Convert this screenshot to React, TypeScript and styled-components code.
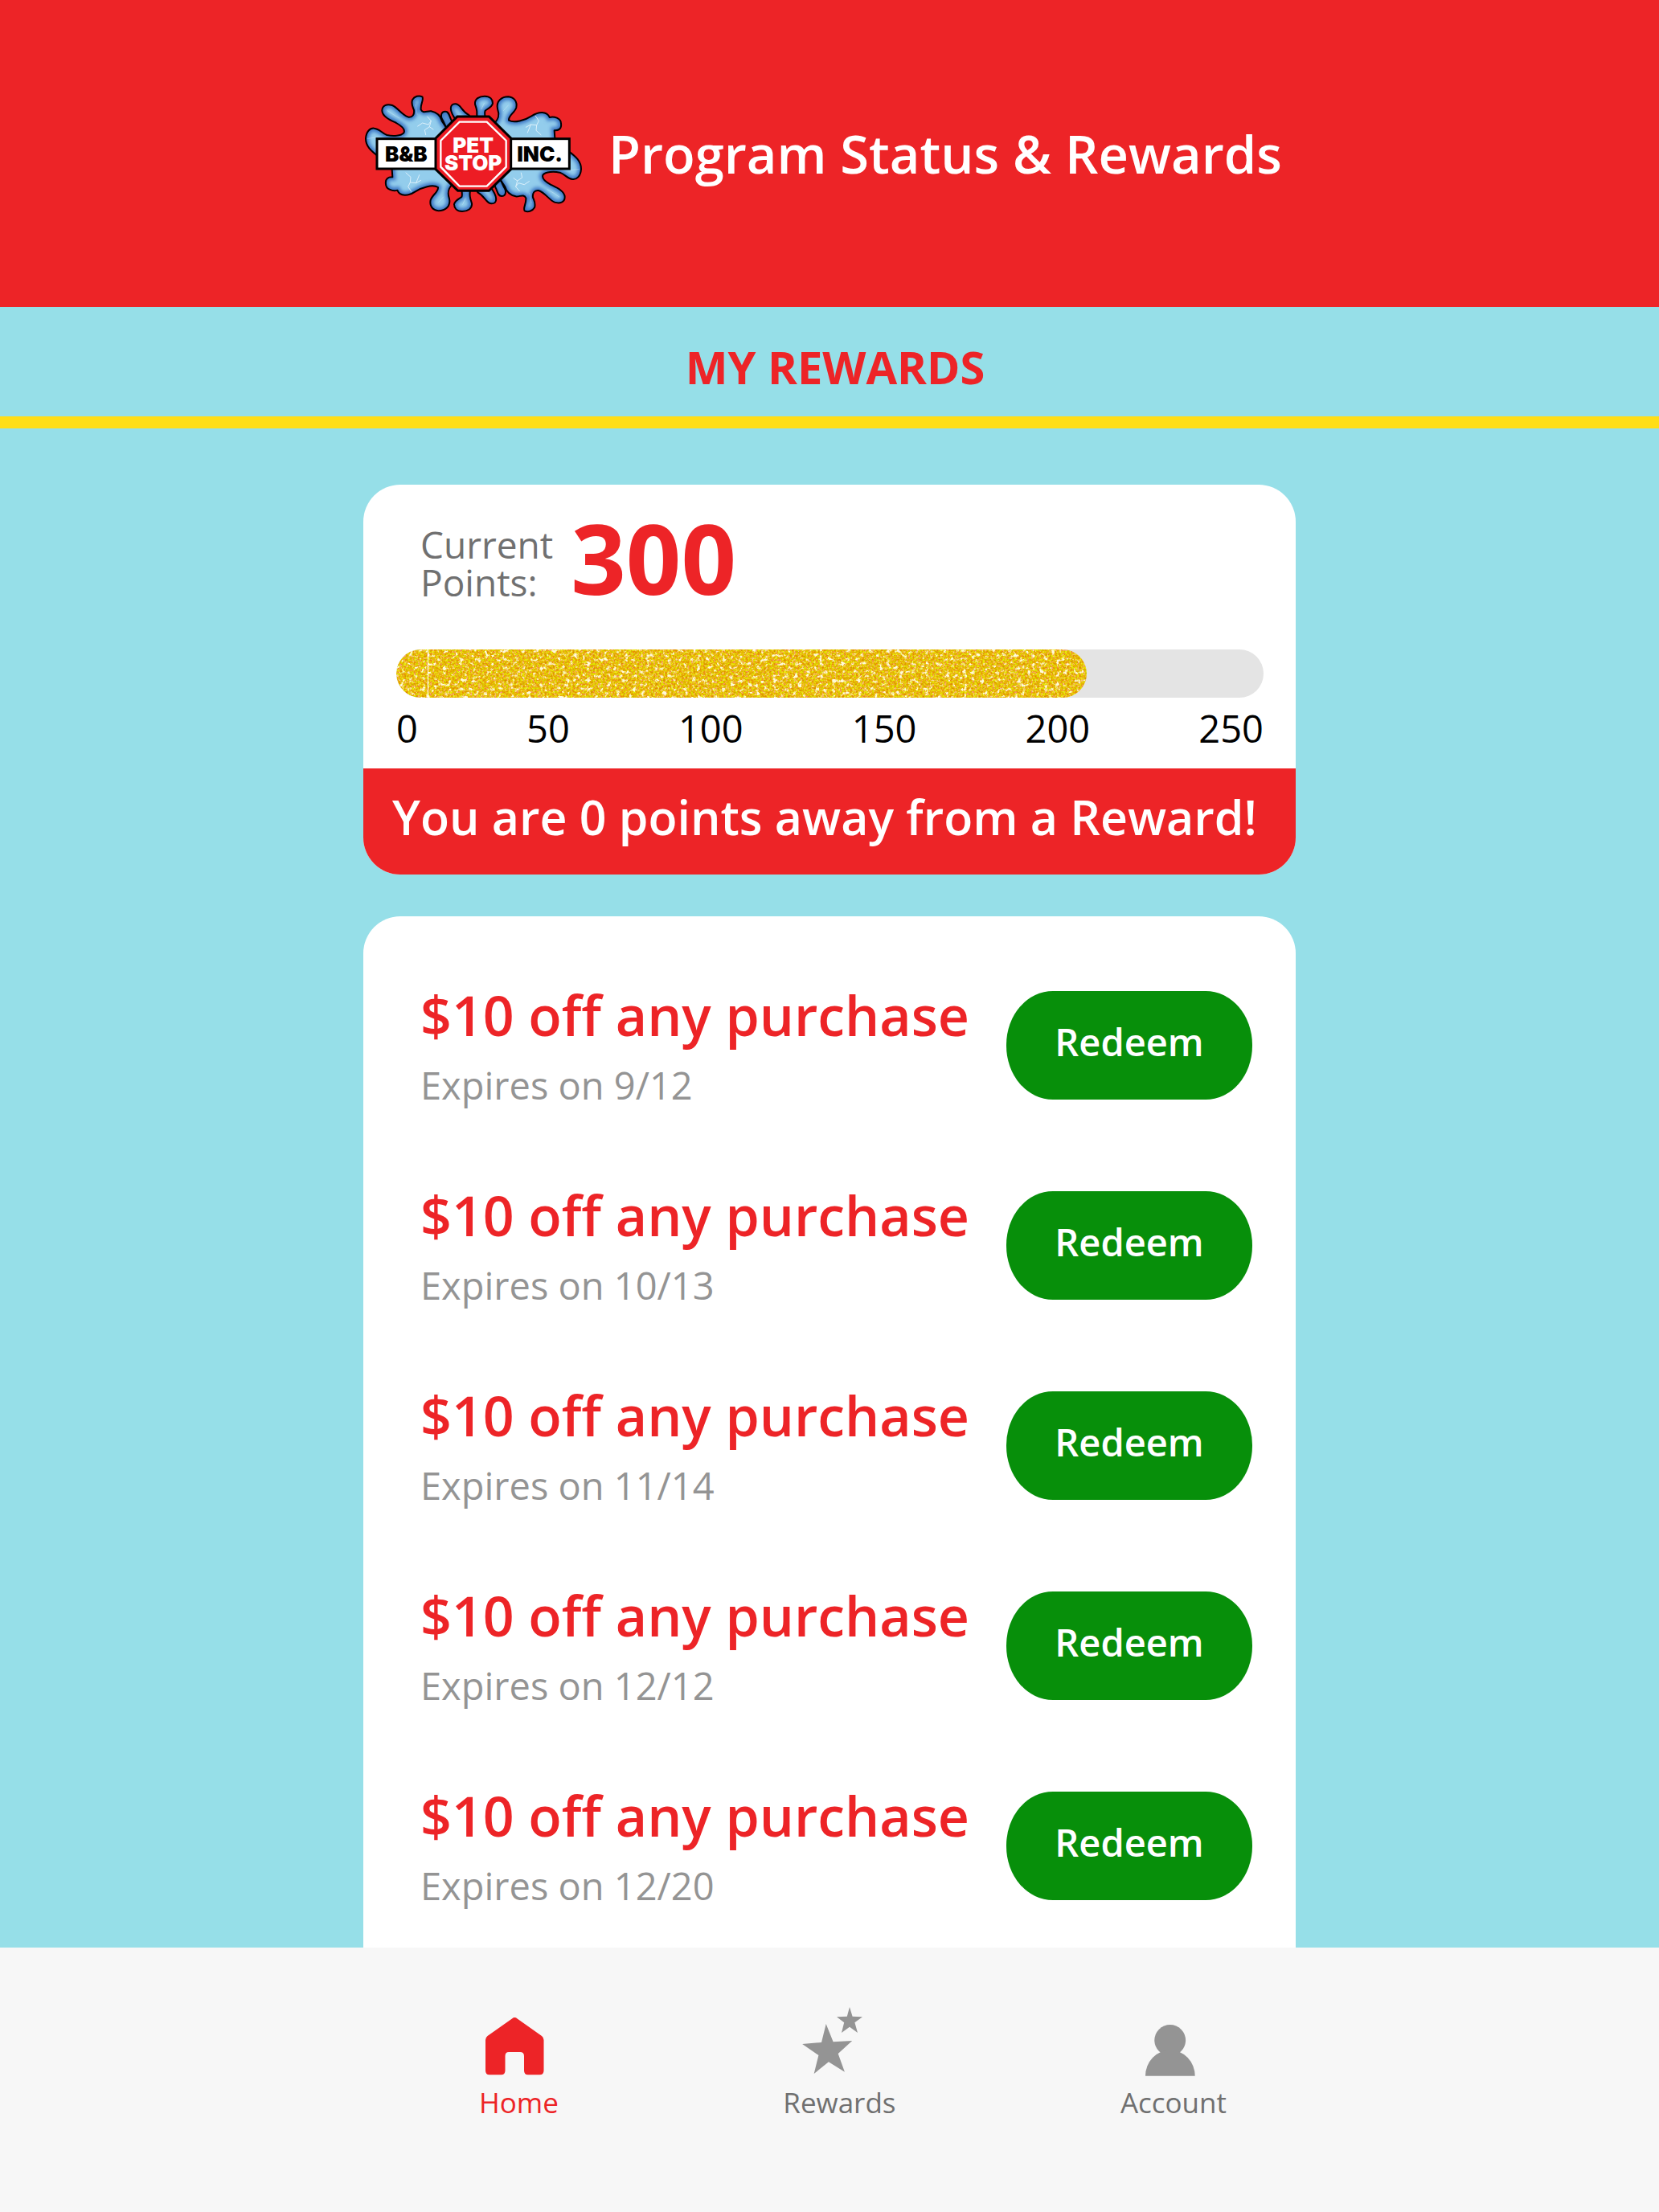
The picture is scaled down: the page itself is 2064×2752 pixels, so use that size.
import React from 'react';
import styled, { createGlobalStyle } from 'styled-components';

const red = '#ed2427';
const sky = '#96dfe8';
const column = '1160px';

const GlobalStyle = createGlobalStyle`
  *, *::before, *::after { box-sizing: border-box; }
  body {
    margin: 0;
    background: ${sky};
    font-family: "Open Sans", "Noto Sans", sans-serif;
  }
  h1, h2, h3, p, ul { margin: 0; padding: 0; }
  ul { list-style: none; }
`;

const Page = styled.div`
  display: flex;
  flex-direction: column;
  min-height: 100vh;
`;

const Header = styled.header`
  display: flex;
  justify-content: center;
  background: ${red};
`;

const Brand = styled.div`
  display: flex;
  align-items: center;
  gap: 32px;
  width: 100%;
  max-width: ${column};
  min-height: 382px;
  padding-left: 1px;
`;

const LogoSvg = styled.svg`
  flex: none;
  width: 272px;
  height: 148px;
`;

const Title = styled.h1`
  color: #fff;
  font-size: 65px;
  font-weight: 600;
  line-height: 80px;
`;

const Strip = styled.div`
  display: flex;
  align-items: center;
  justify-content: center;
  padding: 32px 0 20px 14px;
  border-bottom: 15px solid #ffde17;
`;

const StripTitle = styled.h2`
  color: ${red};
  font-size: 56px;
  font-weight: 700;
  line-height: 84px;
`;

const Main = styled.main`
  display: flex;
  flex: 1;
  flex-direction: column;
  align-items: center;
  gap: 52px;
  padding-top: 70px;
`;

const Card = styled.section<{ $grow?: boolean }>`
  width: 100%;
  max-width: ${column};
  flex: ${(p) => (p.$grow ? '1' : 'none')};
  overflow: hidden;
  border-radius: ${(p) => (p.$grow ? '46px 46px 0 0' : '46px')};
  background: #fff;
`;

const Points = styled.div`
  display: flex;
  align-items: flex-end;
  gap: 22px;
  padding: 37px 70px 60px 71px;
`;

const PointsLabel = styled.p`
  width: min-content;
  color: #707070;
  font-size: 46px;
  line-height: 47px;
`;

const PointsValue = styled.p`
  color: ${red};
  font-size: 120px;
  font-weight: 700;
  line-height: 108px;
`;

const Gauge = styled.div`
  padding: 0 40px 26px 41px;
`;

const Track = styled.div`
  height: 60px;
  overflow: hidden;
  border-radius: 30px;
  background: #e4e4e4;
`;

const Fill = styled.div`
  height: 100%;
  overflow: hidden;
  border-radius: 30px;
`;

const GlitterSvg = styled.svg`
  display: block;
  width: 100%;
  height: 100%;
`;

const Scale = styled.ul`
  display: flex;
  justify-content: space-between;
  margin-top: 14px;
  color: #000;
  font-size: 47px;
  line-height: 48px;
`;

const Banner = styled.p`
  padding: 20px 36px 32px;
  background: ${red};
  color: #fff;
  font-size: 59px;
  font-weight: 600;
  line-height: 80px;
`;

const RewardList = styled.ul`
  display: flex;
  flex-direction: column;
  gap: 102px;
  padding: 87px 54px 53px 71px;
`;

const RewardRow = styled.li`
  display: flex;
  align-items: center;
  justify-content: space-between;
  gap: 24px;
`;

const RewardText = styled.div`
  display: flex;
  flex-direction: column;
  gap: 27px;
`;

const RewardTitle = styled.h3`
  color: ${red};
  font-size: 68px;
  font-weight: 600;
  line-height: 72px;
`;

const Expiry = styled.p`
  color: #949494;
  font-size: 47px;
  line-height: 48px;
`;

const Redeem = styled.button`
  flex: none;
  width: 306px;
  height: 135px;
  padding: 0 0 9px;
  border: 0;
  border-radius: 58px / 67px;
  background: #078f0a;
  color: #fff;
  font-family: inherit;
  font-size: 47px;
  font-weight: 600;
  line-height: 48px;
  cursor: pointer;
`;

const Nav = styled.nav`
  display: flex;
  justify-content: center;
  background: #f7f7f7;
`;

const NavItems = styled.ul`
  display: flex;
  justify-content: space-between;
  width: 100%;
  max-width: ${column};
  padding: 73px 86px 116px 144px;
`;

const NavLink = styled.a<{ $active?: boolean }>`
  display: flex;
  flex-direction: column;
  align-items: center;
  gap: 12px;
  color: ${(p) => (p.$active ? red : '#707070')};
  font-size: 35px;
  line-height: 40px;
  text-decoration: none;
`;

const NavIcon = styled.svg<{ $active?: boolean }>`
  width: 96px;
  height: 88px;
  fill: ${(p) => (p.$active ? red : '#949494')};
`;

const LogoText = styled.text`
  font-family: "Inter", "Liberation Sans", sans-serif;
  font-size: 78px;
  font-weight: 900;
  text-anchor: middle;
`;

const splashes = [
  // left arm and body
  'M96 285 C64 262 46 244 46 216 C48 190 62 176 78 178 C98 180 105 196 125 203 C150 208 178 206 188 195 C196 180 178 168 160 158 C140 148 108 135 107 112 C107 92 125 86 145 92 C165 100 180 128 205 136 C222 138 228 125 226 110 C220 95 215 88 220 72 C228 58 245 54 257 60 C264 72 250 85 252 108 C260 125 275 112 290 114 C310 118 325 132 330 150 L350 180 L448 273 Z',
  // small drops beside the sign
  'M335 150 C322 132 328 115 343 115 C358 115 358 135 366 148 L372 175 L345 172 Z',
  'M385 150 C356 112 358 87 380 87 C402 87 402 114 432 129 L440 150 Z',
  // middle finger
  'M458 150 C465 120 460 105 454 88 C452 68 470 58 490 58 C510 58 520 70 520 85 C516 100 500 105 492 112 C488 120 490 128 494 150 Z',
  // right body
  'M525 160 C545 142 545 125 538 105 C532 75 555 60 578 60 C602 62 612 80 608 100 C602 120 578 130 580 148 C600 160 640 148 665 132 C690 115 722 112 732 137 C748 132 775 140 775 160 C778 180 765 187 750 186 L752 215 L752 273 L448 273 Z',
];

function SplashHalf({ turned }: { turned?: boolean }) {
  const id = turned ? 'splash-low' : 'splash-high';
  return (
    <g transform={turned ? 'rotate(180 448 273)' : undefined}>
      {splashes.map((d, i) => (
        <g key={i}>
          <clipPath id={`${id}-${i}`}>
            <path d={d} />
          </clipPath>
          <g clipPath={`url(#${id}-${i})`}>
            <path d={d} fill="#93cdec" />
            <path d={d} fill="none" stroke="#3c78c6" strokeWidth="24" filter="url(#soft)" />
          </g>
          <path d={d} fill="none" stroke="#000" strokeWidth="6" strokeLinejoin="round" />
        </g>
      ))}
      <g fill="none" stroke="#e8f6fd" strokeWidth="3" strokeLinecap="round" strokeLinejoin="round" opacity="0.85">
        <path d="M240 170 L258 158 L280 164 L290 150 L276 134 M290 150 L284 172 L266 184 L270 202 M284 172 L298 182" />
        <path d="M644 174 L662 164 L684 166 L692 150 L680 132 M684 166 L682 186 L700 202 M662 164 L650 194" />
        <path d="M128 112 L148 126 L172 140 M54 216 L84 212 M232 90 L238 126 M488 84 L478 106 M578 92 L560 112" strokeWidth="2" opacity="0.6" />
      </g>
    </g>
  );
}

function Logo() {
  return (
    <LogoSvg viewBox="40 50 816 444" role="img" aria-label="B&B Pet Stop Inc.">
      <defs>
        <filter id="soft" x="-20%" y="-20%" width="140%" height="140%">
          <feGaussianBlur stdDeviation="6" />
        </filter>
      </defs>
      <SplashHalf />
      <SplashHalf turned />
      <rect x="88" y="217" width="718" height="112" fill="#fff" stroke="#000" strokeWidth="9" />
      <polygon
        points="388,134 506,134 588,215 588,331 506,411 390,411 307,331 307,215"
        fill="#ed1c24"
        stroke="#000"
        strokeWidth="9"
      />
      <polygon
        points="396,154 498,154 570,224 570,322 498,394 396,394 326,322 326,224"
        fill="none"
        stroke="#fff"
        strokeWidth="7"
      />
      <LogoText x="197" y="301">B&amp;B</LogoText>
      <LogoText x="696" y="301">INC.</LogoText>
      <LogoText fill="#fff">
        <tspan x="447" y="269">PET</tspan>
        <tspan x="447" y="335">STOP</tspan>
      </LogoText>
    </LogoSvg>
  );
}

function Glitter() {
  return (
    <GlitterSvg aria-hidden="true">
      <defs>
        <filter id="gold" x="0" y="0" width="100%" height="100%" colorInterpolationFilters="sRGB">
          <feTurbulence type="fractalNoise" baseFrequency="0.4" numOctaves="3" seed="4" />
          <feColorMatrix values="2.6 0 0 0 -0.8  0 2.6 0 0 -0.8  2.6 0 0 0 -0.8  0 0 0 0 1" />
          <feComponentTransfer>
            <feFuncR type="table" tableValues="0.84 0.88 0.91 0.92 0.94 0.96" />
            <feFuncG type="table" tableValues="0.57 0.66 0.71 0.75 0.82 0.92" />
            <feFuncB type="table" tableValues="0 0 0 0.04 0.14 0.4" />
          </feComponentTransfer>
        </filter>
        <filter id="flecks" x="0" y="0" width="100%" height="100%" colorInterpolationFilters="sRGB">
          <feTurbulence type="fractalNoise" baseFrequency="0.19" numOctaves="4" seed="11" />
          <feColorMatrix values="0 0 0 0 1  0 0 0 0 0.98  0 0 0 0 0.86  6 0 0 0 -3.5" />
        </filter>
      </defs>
      <rect width="100%" height="100%" filter="url(#gold)" />
      <rect width="100%" height="100%" filter="url(#flecks)" />
      <rect x="39" width="1" height="100%" fill="#fff" />
    </GlitterSvg>
  );
}

const marks = [0, 50, 100, 150, 200, 250];
const progress = 79.6;

const rewards = [
  { title: '$10 off any purchase', expires: '9/12' },
  { title: '$10 off any purchase', expires: '10/13' },
  { title: '$10 off any purchase', expires: '11/14' },
  { title: '$10 off any purchase', expires: '12/12' },
  { title: '$10 off any purchase', expires: '12/20' },
];

export default function App() {
  return (
    <Page>
      <GlobalStyle />
      <Header>
        <Brand>
          <Logo />
          <Title>Program Status &amp; Rewards</Title>
        </Brand>
      </Header>
      <Strip>
        <StripTitle>MY REWARDS</StripTitle>
      </Strip>
      <Main>
        <Card>
          <Points>
            <PointsLabel>Current Points:</PointsLabel>
            <PointsValue>300</PointsValue>
          </Points>
          <Gauge>
            <Track role="progressbar" aria-label="Reward progress" aria-valuenow={progress}>
              <Fill style={{ width: `${progress}%` }}>
                <Glitter />
              </Fill>
            </Track>
            <Scale>
              {marks.map((m) => (
                <li key={m}>{m}</li>
              ))}
            </Scale>
          </Gauge>
          <Banner>You are 0 points away from a Reward!</Banner>
        </Card>
        <Card $grow>
          <RewardList>
            {rewards.map((r) => (
              <RewardRow key={r.expires}>
                <RewardText>
                  <RewardTitle>{r.title}</RewardTitle>
                  <Expiry>Expires on {r.expires}</Expiry>
                </RewardText>
                <Redeem type="button">Redeem</Redeem>
              </RewardRow>
            ))}
          </RewardList>
        </Card>
      </Main>
      <Nav>
        <NavItems>
          <li>
            <NavLink href="#home" $active>
              <NavIcon $active viewBox="0 0 96 88" aria-hidden="true">
                <path d="M40 15.5 Q43.3 12.6 46.6 15.5 L77 37 Q79.5 39 79.5 42 V80 Q79.5 85.3 74.5 85.3 H60 Q55 85.3 55 80 V62 Q55 57 50 57 H36 Q31.5 57 31.5 62 V80 Q31.5 85.3 26.5 85.3 H12 Q7 85.3 7 80 V42 Q7 39 9.5 37 Z" />
              </NavIcon>
              Home
            </NavLink>
          </li>
          <li>
            <NavLink href="#rewards">
              <NavIcon viewBox="0 0 96 88" aria-hidden="true">
                <polygon points="31.7,22 40.6,44.3 64.2,43 46.7,59 54.9,81.7 34.9,69.3 16.7,84 22.4,61 2.1,47 26,45" />
                <polygon points="61,1 64.6,12.7 77,13.3 67.4,20.3 71,33 61,25.7 51,33 54.2,20.3 45,13.3 57.8,12.7" />
              </NavIcon>
              Rewards
            </NavLink>
          </li>
          <li>
            <NavLink href="#account">
              <NavIcon viewBox="0 0 96 88" aria-hidden="true">
                <circle cx="43.7" cy="42.4" r="19.4" />
                <path d="M13 86.7 A30.8 32 0 0 1 74.7 86.7 Z" />
              </NavIcon>
              Account
            </NavLink>
          </li>
        </NavItems>
      </Nav>
    </Page>
  );
}
